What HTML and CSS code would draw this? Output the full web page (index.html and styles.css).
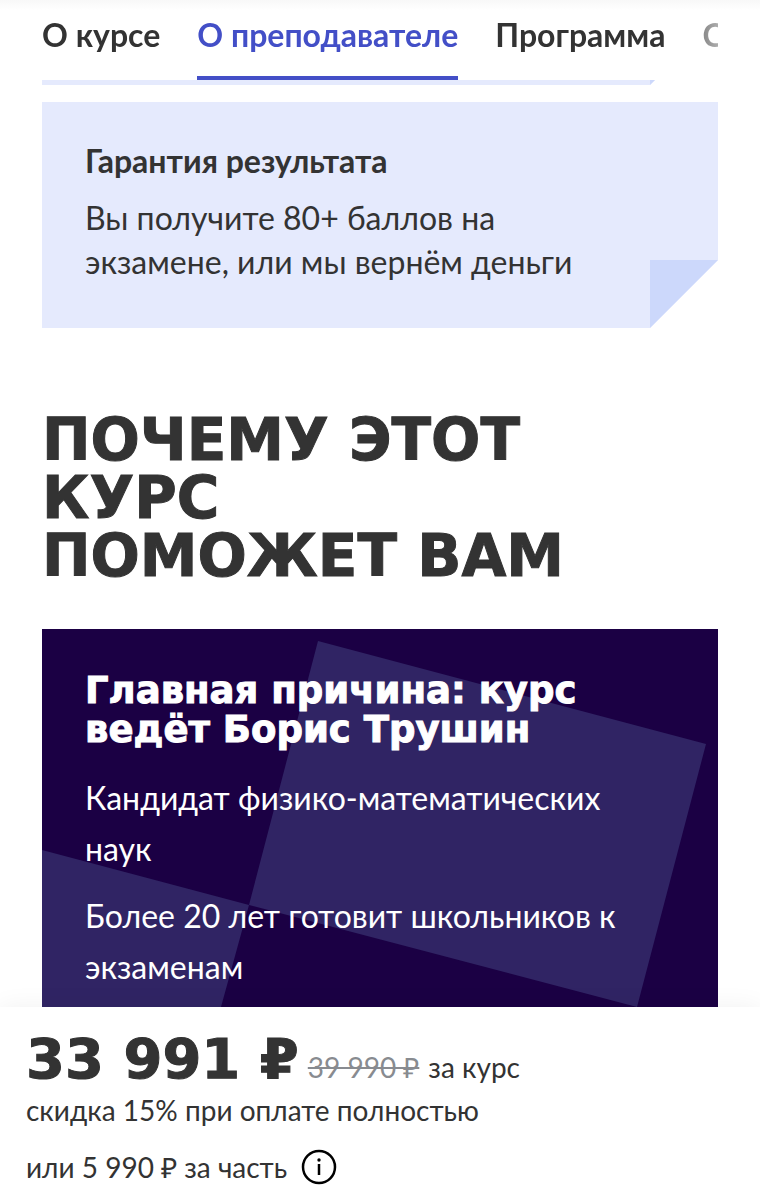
FILE: index.html
```
<!DOCTYPE html>
<html lang="ru">
<head>
    <meta charset="UTF-8">
    <meta name="viewport" content="width=device-width, initial-scale=1">
    <title>Курс Бориса Трушина</title>
    <link rel="stylesheet" href="styles.css">
</head>
<body>
    <header class="header">
        <nav class="tabs">
            <a class="tab" href="#about">О курсе</a>
            <a class="tab active" href="#teacher">О преподавателе</a>
            <a class="tab" href="#program">Программа</a>
            <a class="tab" href="#price">С</a>
        </nav>
    </header>

    <main class="content">
        <div class="card card-prev"></div>
        <section class="card" id="about">
            <h3>Гарантия результата</h3>
            <p>Вы получите 80+ баллов на экзамене, или мы вернём деньги</p>
        </section>

        <h1 class="title">Почему этот<br>курс<br>поможет вам</h1>

        <section class="reason" id="teacher">
            <svg class="reason-bg" viewBox="0 0 676 378" aria-hidden="true">
                <path fill="#302464" d="M276 12L664 115L595 378L207 276ZM0 221L207 276L179 378H0Z"/>
            </svg>
            <h2>Главная причина: курс<br>ведёт Борис Трушин</h2>
            <p>Кандидат физико-математических наук</p>
            <p>Более 20 лет готовит школьников к экзаменам</p>
        </section>
    </main>

    <footer class="buy" id="price">
        <div class="price">
            <strong>33 991 ₽</strong>
            <s>39 990 ₽</s>
            <span>за курс</span>
        </div>
        <div class="discount">скидка 15% при оплате полностью</div>
        <div class="part">
            <span>или 5 990 ₽ за часть</span>
            <button class="info" type="button" aria-label="Подробнее">
                <svg viewBox="0 0 36 36" fill="none" stroke="#000">
                    <circle cx="18" cy="18" r="16" stroke-width="2.5"/>
                    <path stroke-width="2.5" d="M18 15V26"/>
                    <circle cx="18" cy="11" r="1.7" fill="#000" stroke="none"/>
                </svg>
            </button>
        </div>
    </footer>
</body>
</html>
```
FILE: styles.css
```
* {
    box-sizing: border-box;
}
body {
    display: flex;
    flex-direction: column;
    height: 100vh;
    margin: 0;
    overflow: hidden;
    background: #fff;
    color: #333;
    font-family: Lato, "Open Sans", sans-serif;
    font-size: 32px;
}
h1, h2, h3, p {
    margin: 0;
}
a {
    color: inherit;
    text-decoration: none;
}

.header {
    flex: none;
    padding: 0 42px;
    background: linear-gradient(#f8f8f8, #fff 10px);
}
.tabs {
    display: flex;
    gap: 37px;
    overflow: hidden;
    -webkit-mask-image: linear-gradient(to left, rgba(0, 0, 0, 0.4), #000 50px);
    mask-image: linear-gradient(to left, rgba(0, 0, 0, 0.4), #000 50px);
}
.tab {
    flex: none;
    height: 80px;
    border-bottom: 4px solid transparent;
    font-weight: bold;
    line-height: 70px;
}
.tab.active {
    border-color: #434fc7;
    color: #434fc7;
}

.content {
    flex: 1;
    min-height: 0;
    padding: 0 42px;
    overflow: hidden;
}
.card {
    position: relative;
    padding: 37px 80px 44px 43px;
    background: #e5eafd;
    clip-path: polygon(0 0, 100% 0, 100% calc(100% - 68px), calc(100% - 68px) 100%, 0 100%);
    line-height: 44px;
}
.card::after {
    content: "";
    position: absolute;
    right: 0;
    bottom: 0;
    width: 68px;
    height: 68px;
    background: #ccd8fb;
}
.card-prev {
    height: 80px;
    margin: -75px 0 17px;
    padding: 0;
}
.card h3 {
    margin-bottom: 13px;
    font-size: 32px;
}

/* wide heavy face for the headings and the price */
.title,
.reason h2,
.price strong {
    font-family: "DejaVu Sans", sans-serif;
    font-weight: bold;
    -webkit-text-stroke: 1px currentColor;
}

.title {
    margin: 83px 0 44px;
    font-size: 58px;
    line-height: 58px;
    text-transform: uppercase;
}

.reason {
    position: relative;
    padding: 42px 60px 60px 43px;
    background: #1b0044;
    color: #fff;
    line-height: 51px;
}
.reason-bg {
    position: absolute;
    top: 0;
    left: 0;
    width: 100%;
}
.reason h2 {
    position: relative;
    margin-bottom: 23px;
    font-size: 37px;
    line-height: 39px;
}
.reason p {
    position: relative;
    margin-bottom: 16px;
}

.buy {
    position: relative;
    flex: none;
    padding: 24px 26px 15px;
    background: #fff;
    box-shadow: 0 0 24px rgba(0, 0, 0, 0.06);
    font-size: 28px;
    line-height: 36px;
}
.price {
    display: flex;
    align-items: baseline;
    gap: 9px;
}
.price strong {
    font-size: 56px;
    line-height: 56px;
}
.price s {
    color: #888b90;
}
.discount {
    line-height: 46px;
}
.part {
    display: flex;
    align-items: center;
    gap: 14px;
    padding-top: 16px;
}
.info {
    width: 36px;
    height: 36px;
    padding: 0;
    border: 0;
    background: none;
}
.info svg {
    display: block;
}
```
